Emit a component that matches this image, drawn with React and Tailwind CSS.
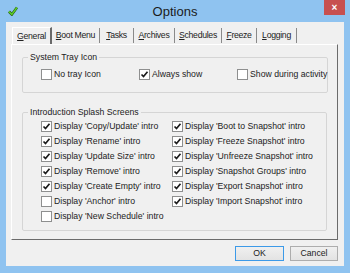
const TABS = [
  { key: 'G', rest: 'eneral', w: 'w-[40px]', active: true },
  { key: 'B', rest: 'oot Menu', w: 'w-[48px]' },
  { key: 'T', rest: 'asks', w: 'w-[34px]' },
  { key: 'A', rest: 'rchives', w: 'w-[41px]' },
  { key: 'S', rest: 'chedules', w: 'w-[47px]' },
  { key: 'F', rest: 'reeze', w: 'w-[35px]' },
  { key: 'L', rest: 'ogging', w: 'w-[40px]' },
]

const LEFT = [
  ['Copy/Update', true],
  ['Rename', true],
  ['Update Size', true],
  ['Remove', true],
  ['Create Empty', true],
  ['Anchor', false],
  ['New Schedule', false],
]

const RIGHT = [
  ['Boot to Snapshot', true],
  ['Freeze Snapshot', true],
  ['Unfreeze Snapshot', true],
  ['Snapshot Groups', true],
  ['Export Snapshot', true],
  ['Import Snapshot', true],
]

function Box({ checked }) {
  return (
    <span className="flex h-[11px] w-[11px] shrink-0 items-center justify-center border border-[#8e8f8f] bg-white">
      {checked && (
        <svg width="9" height="9" viewBox="0 0 9 9">
          <path d="M1.5 4.5 L3.5 6.5 L7.5 1.8" fill="none" stroke="#1a1a1a" strokeWidth="1.7" />
        </svg>
      )}
    </span>
  )
}

function Check({ label, checked, className = '' }) {
  return (
    <div className={`flex h-[15px] items-center gap-[2px] ${className}`}>
      <Box checked={checked} />
      <span className="whitespace-nowrap">{label}</span>
    </div>
  )
}

export default function App() {
  return (
    <div
      className="flex h-[273px] w-[350px] flex-col bg-[#8fc3f0] text-[8.7px] leading-[11px] text-[#222]"
      style={{ fontFamily: '"Liberation Sans", Arial, sans-serif' }}
    >
      <div className="grid h-[22px] grid-cols-[1fr_auto_1fr]">
        <div className="flex items-center pl-[8px]">
          <svg width="10" height="10" viewBox="0 0 10 10">
            <path d="M1 5.5 L3.8 8.5 L9 1.5" fill="none" stroke="#2a5a10" strokeWidth="2.6" />
            <path d="M1 5.5 L3.8 8.5 L9 1.5" fill="none" stroke="#5cd12a" strokeWidth="1.4" />
          </svg>
        </div>
        <div className="flex items-center text-[13px] leading-[15px] text-[#1b1b1b]">Options</div>
        <div className="flex justify-end pr-[5px]">
          <div className="flex h-[15px] w-[21px] items-center justify-center bg-[#c75050] text-[10px] font-bold leading-none text-white">
            ×
          </div>
        </div>
      </div>

      <div className="mx-[6px] flex h-[244px] flex-col bg-[#f0f0f0]">
        <div className="flex pl-[6px] pt-[5px] tracking-[-0.3px]">
          {TABS.map(t => (
            <div
              key={t.key}
              className={`flex items-center justify-center ${t.w} ${
                t.active
                  ? 'h-[17px] border-l border-t border-r-2 border-l-white border-t-white border-r-[#6a6a6a]'
                  : 'mt-[1px] h-[15px] border-r border-r-[#8a8a8a]'
              }`}
            >
              <span>
                <span className="underline">{t.key}</span>
                {t.rest}
              </span>
            </div>
          ))}
        </div>

        <div className="ml-[5px] flex h-[196px] w-[327px] flex-col border border-b-[#6b6b6b] border-l-white border-r-[#6b6b6b] border-t-white px-[10px] pt-[7px]">
          <fieldset className="h-[41px] rounded-[2px] border border-[#d5d5d5] p-0">
            <legend className="ml-[5px] px-[2px]">System Tray Icon</legend>
            <div className="mt-[4px] flex pl-[18px]">
              <Check label="No tray Icon" checked={false} className="w-[98px]" />
              <Check label="Always show" checked className="w-[98px]" />
              <Check label="Show during activity" checked={false} />
            </div>
          </fieldset>

          <fieldset className="mt-[14px] h-[124px] rounded-[2px] border border-[#d5d5d5] p-0">
            <legend className="ml-[5px] px-[2px]">Introduction Splash Screens</legend>
            <div className="mt-[1px] grid grid-cols-[131px_1fr] pl-[18px]">
              <div className="flex flex-col">
                {LEFT.map(([n, c]) => (
                  <Check key={n} label={`Display '${n}' intro`} checked={c} />
                ))}
              </div>
              <div className="flex flex-col">
                {RIGHT.map(([n, c]) => (
                  <Check key={n} label={`Display '${n}' intro`} checked={c} />
                ))}
              </div>
            </div>
          </fieldset>
        </div>

        <div className="mr-[6px] mt-[6px] flex justify-end gap-[6px]">
          <button className="h-[15px] w-[49px] border border-[#3c9ae8] bg-gradient-to-b from-[#f0f0f0] to-[#e3e3e3] text-[8.7px] leading-none">
            OK
          </button>
          <button className="h-[15px] w-[48px] border border-[#adadad] bg-gradient-to-b from-[#f0f0f0] to-[#e3e3e3] text-[8.7px] leading-none">
            Cancel
          </button>
        </div>
      </div>
    </div>
  )
}
